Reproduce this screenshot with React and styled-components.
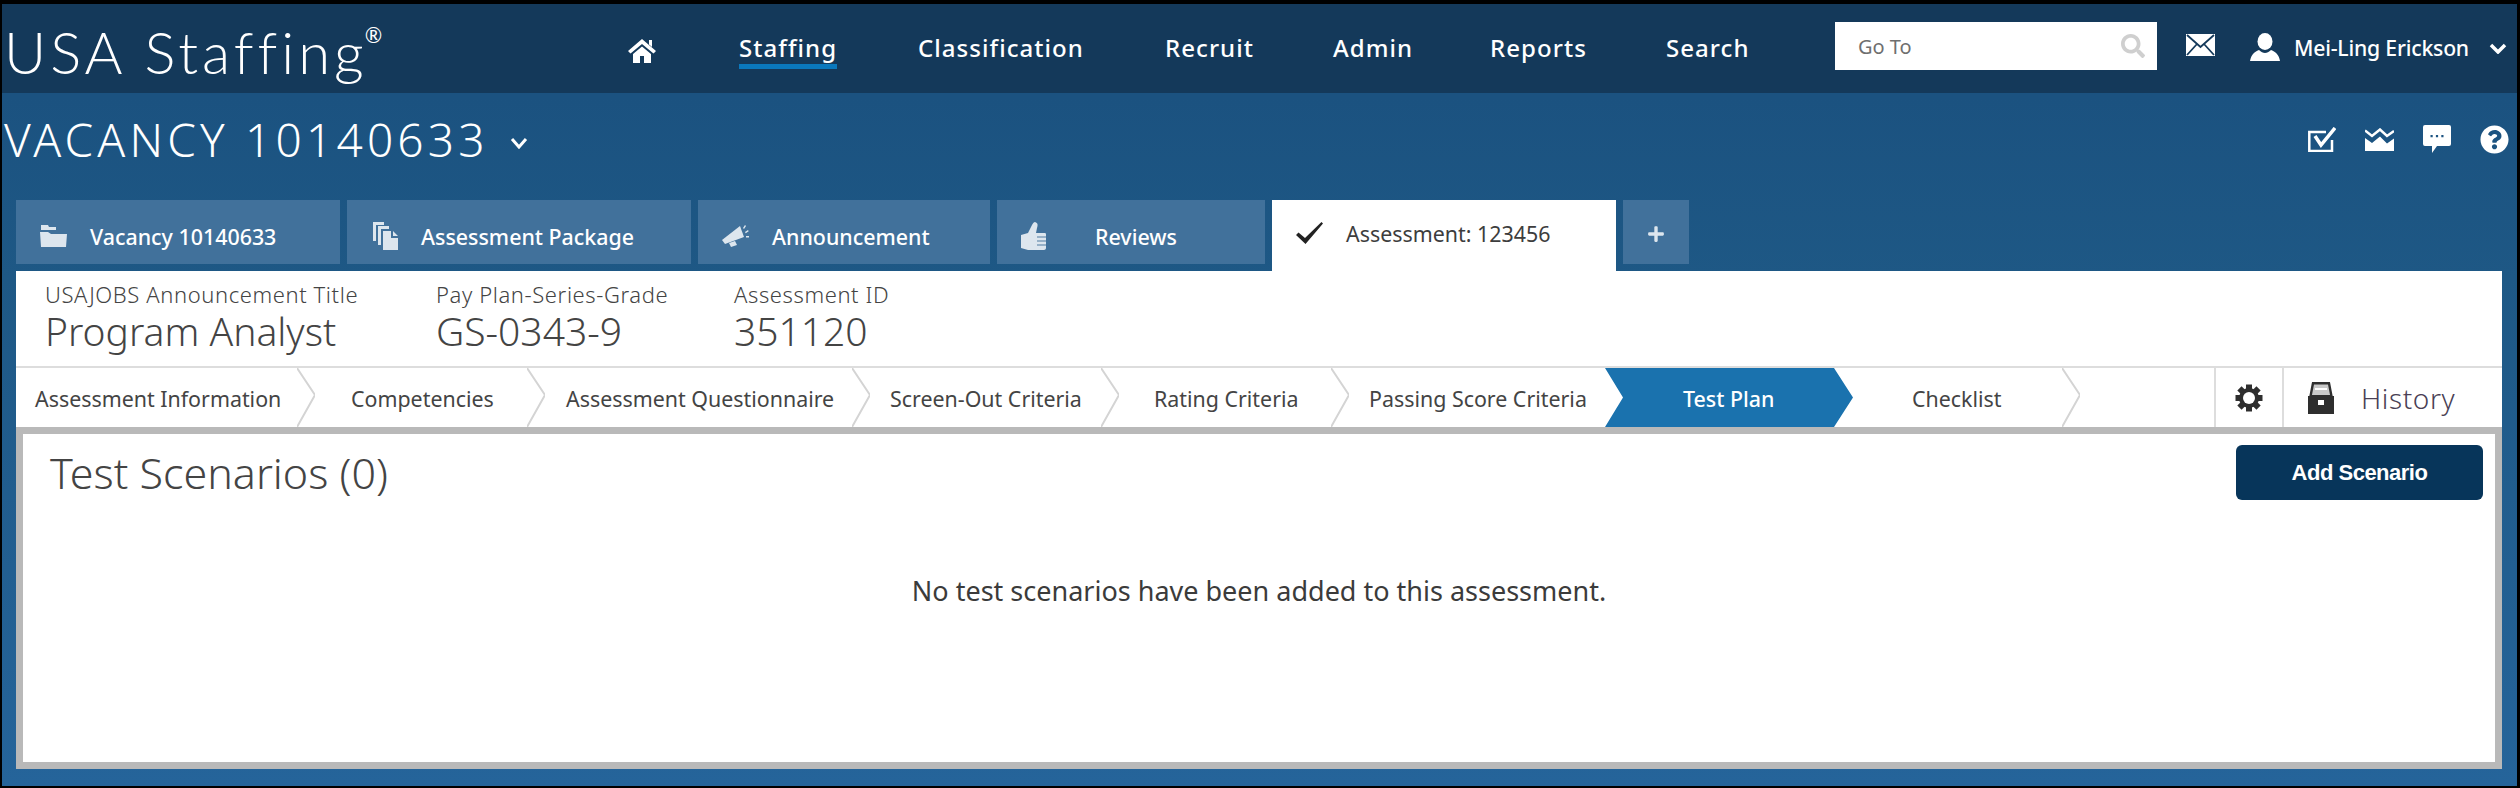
import React from 'react';
import styled, { createGlobalStyle } from 'styled-components';
import { FaSearch, FaQuestionCircle, FaPlus } from 'react-icons/fa';

const Global = createGlobalStyle`
  html, body { margin: 0; padding: 0; background: #000; }
  * { box-sizing: border-box; }
`;

const Page = styled.div`
  width: 2520px;
  height: 788px;
  padding: 4px 3px 2px 2px;
  background: #000;
  font-family: "Noto Sans", "Liberation Sans", sans-serif;
  overflow: hidden;
`;

const Frame = styled.div`
  height: 100%;
  display: flex;
  flex-direction: column;
  background: linear-gradient(#1b5280 12%, #1e5885 35%, #25649a 100%);
`;

const Header = styled.header`
  height: 89px;
  flex: none;
  display: flex;
  align-items: center;
  background: #14395a;
  color: #fff;
`;

const Logo = styled.div`
  width: 626px;
  padding-left: 2px;
  display: flex;
  font-size: 58px;
  font-family: Lato, sans-serif;
  font-weight: 300;
  letter-spacing: 4px;
  line-height: 1;
  margin-top: 6px;
  sup {
    font-size: 21px;
    font-weight: 400;
    line-height: 1;
    letter-spacing: 0;
    margin: 1px 0 0 -3px;
  }
`;

const Nav = styled.nav`
  align-self: flex-start;
  margin-top: 28px;
  display: flex;
  align-items: flex-start;
`;

const HomeLink = styled.a`
  width: 111px;
  margin-top: 7px;
  display: flex;
  color: #fff;
`;

const NavLink = styled.a`
  width: ${p => p.$w}px;
  font-size: 24px;
  font-weight: 500;
  line-height: 32px;
  letter-spacing: 1.05px;
  white-space: nowrap;
  span {
    display: inline-block;
    border-bottom: ${p => (p.$on ? '5px solid #0a78bd' : 'none')};
  }
`;

const GoTo = styled.div`
  width: 322px;
  height: 48px;
  margin-top: -5px;
  flex: none;
  display: flex;
  align-items: center;
  justify-content: space-between;
  padding: 0 12px 0 23px;
  background: #fff;
  color: #6f6f6f;
  font-size: 20px;
  svg { color: #cfcfcf; font-size: 24px; }
`;

const MailIcon = styled.svg`
  width: 29px;
  height: 22px;
  margin: -8px 35px 0 29px;
  flex: none;
`;

const UserIcon = styled.svg`
  width: 30px;
  height: 28px;
  margin: -4px 14px 0 0;
  flex: none;
`;

const UserName = styled.div`
  width: 195px;
  font-size: 21.2px;
  font-weight: 500;
  white-space: nowrap;
  letter-spacing: -0.2px;
  margin-top: -2px;
`;

const TitleRow = styled.div`
  height: 107px;
  flex: none;
  display: flex;
  align-items: center;
  justify-content: space-between;
  padding: 0 8px 15px 2px;
  color: #fff;
`;

const Title = styled.h1`
  margin: 0;
  display: flex;
  align-items: center;
  gap: 21px;
  font-size: 46px;
  font-weight: 300;
  line-height: 1;
  letter-spacing: 4.2px;
  svg { margin-top: 8px; }
`;

const ToolIcons = styled.div`
  display: flex;
  align-items: center;
  font-size: 29px;
  svg { display: block; margin-left: 29px; }
`;

const Tabs = styled.div`
  height: 71px;
  flex: none;
  display: flex;
  align-items: flex-start;
  gap: 7px;
  padding-left: 14px;
`;

const Tab = styled.div`
  width: ${p => p.$w}px;
  height: ${p => (p.$on ? 71 : 64)}px;
  display: flex;
  align-items: center;
  padding: ${p => (p.$on ? 0 : 8)}px 0 ${p => (p.$on ? 5 : 0)}px 24px;
  background: ${p => (p.$on ? '#fff' : '#41719b')};
  color: ${p => (p.$on ? '#3d3d3d' : '#fff')};
  font-size: 21.4px;
  font-weight: ${p => (p.$on ? 400 : 500)};
  white-space: nowrap;
`;

const TabIcon = styled.span`
  width: ${p => p.$w || 27}px;
  margin-right: ${p => p.$gap || 23}px;
  flex: none;
  display: flex;
  justify-content: center;
  color: #dde6ee;
  svg { display: block; }
`;

const PlusTab = styled.div`
  width: 66px;
  height: 64px;
  padding-top: 4px;
  display: flex;
  align-items: center;
  justify-content: center;
  background: #41719b;
  color: #dde6ee;
  font-size: 18px;
`;

const Sheet = styled.main`
  flex: 1;
  margin: 0 15px 17px 14px;
  display: flex;
  flex-direction: column;
  background: #fff;
  color: #3b3b3b;
`;

const InfoBar = styled.div`
  height: 97px;
  flex: none;
  display: flex;
  padding: 9px 0 0 29px;
  border-bottom: 2px solid #ddd;
`;

const InfoCol = styled.div`
  width: ${p => p.$w}px;
`;

const InfoLabel = styled.div`
  font-size: 22px;
  font-weight: 300;
  line-height: 29px;
  letter-spacing: 0.6px;
  color: #444;
  white-space: nowrap;
`;

const InfoValue = styled.div`
  font-size: 39px;
  font-weight: 300;
  line-height: 43px;
  color: #444;
  white-space: nowrap;
`;

const Steps = styled.div`
  height: 59px;
  flex: none;
  display: flex;
  align-items: stretch;
`;

const Step = styled.div`
  width: ${p => p.$w}px;
  padding: 2px 0 0 ${p => p.$pad}px;
  display: flex;
  align-items: center;
  font-size: 21.4px;
  white-space: nowrap;
  color: #444;
  flex: none;
`;

const ActiveStep = styled(Step)`
  background: #1a72ae;
  color: #fff;
  font-weight: 500;
  clip-path: polygon(0 0, 229px 0, 100% 50%, 229px 100%, 0 100%, 18px 50%);
`;

const Chevron = styled.svg`
  width: 18px;
  height: 59px;
  flex: none;
`;

const StepSpacer = styled.div`
  flex: 1;
`;

const GearCell = styled.div`
  width: 70px;
  flex: none;
  display: flex;
  align-items: center;
  justify-content: center;
  border-left: 2px solid #ddd;
  border-right: 2px solid #ddd;
`;

const HistoryCell = styled.div`
  width: 218px;
  flex: none;
  display: flex;
  align-items: center;
  gap: 27px;
  padding-left: 24px;
  font-size: 28px;
  font-weight: 300;
  color: #4a3f55;
  letter-spacing: 0.6px;
`;

const Panel = styled.section`
  flex: 1;
  display: flex;
  flex-direction: column;
  border: 7px solid #b9b9b9;
  padding: 11px 12px 0 27px;
`;

const PanelHead = styled.div`
  display: flex;
  align-items: flex-start;
  justify-content: space-between;
`;

const PanelTitle = styled.h2`
  margin: 0;
  font-size: 43px;
  font-weight: 300;
  line-height: 55px;
  color: #444;
`;

const AddButton = styled.button`
  width: 247px;
  height: 55px;
  padding-top: 2px;
  border: 0;
  border-radius: 6px;
  background: #07355a;
  color: #fff;
  font-family: "Liberation Sans", Arial, sans-serif;
  font-size: 22px;
  font-weight: 700;
  letter-spacing: -0.5px;
`;

const Empty = styled.p`
  margin: 73px 15px 0 0;
  text-align: center;
  font-size: 27px;
  line-height: 36px;
  color: #3b3b3b;
`;

const Divider = () => (
  <Chevron viewBox="0 0 18 59">
    <path d="M0 0 L18 27 L0 59" fill="none" stroke="#d4d4d4" strokeWidth="2" />
  </Chevron>
);

const HomeSvg = () => (
  <svg width="28" height="24" viewBox="0 0 28 24" fill="#fff">
    <path d="M14 0L28 12l-2.500 2.500L14 5 2.500 14.500 0 12z" />
    <path d="M21 1h3v7l-3-2.500z" />
    <path d="M5 15l9-7.500L23 15v9h-7v-7h-4v7H5z" />
  </svg>
);

const FolderSvg = () => (
  <svg width="27" height="22" viewBox="0 0 27 22" fill="currentColor">
    <path d="M1 0h7l1 2h7v3H1z" />
    <path d="M0 7h8l3 2h16l-1 13H1z" />
  </svg>
);

const FilesSvg = () => (
  <svg width="26" height="28" viewBox="0 0 26 28" fill="currentColor">
    <path d="M1 0h11v3H4v16H1z" />
    <path d="M6 4h11v3H9v16H6z" />
    <path d="M11 9h8v7h7v12H11zM21 9l5 5h-5z" />
  </svg>
);

const MegaphoneSvg = () => (
  <svg width="27" height="22" viewBox="0 0 27 22" fill="currentColor">
    <path d="M0 15L18 1l4 11-19 7z" />
    <path d="M7 18l6-2 2 4-6 2z" />
    <path d="M21 3l2-3 1 1-2 3zM23 7l3-2 .7 1.300-3 2zM24 11h3v1.500h-3z" />
  </svg>
);

const ThumbSvg = () => (
  <svg width="25" height="28" viewBox="0 0 25 28">
    <path d="M0 13l7-2 4-8c1-2 2-3 3-3 3 1 3 3 2 6l-1 5h9c1 0 1 1 1 2v13c0 1-1 2-2 2H7l-7-2z" fill="#dde6ee" />
    <path d="M16 15h9M16 19h9M16 23h9" stroke="#7f9fbb" strokeWidth="1.500" />
  </svg>
);

const CheckSvg = () => (
  <svg width="27" height="22" viewBox="0 0 27 22" fill="#222">
    <path d="M0 13l2.500-2.500L9 16 25.500 0 27 1.500 9.500 22z" />
  </svg>
);

const GearSvg = () => (
  <svg width="28" height="28" viewBox="0 0 28 28">
    {[0, 45, 90, 135].map(a => (
      <path key={a} d="M14 0.500V27.500" stroke="#2e2e2e" strokeWidth="6" transform={`rotate(${a} 14 14)`} />
    ))}
    <circle cx="14" cy="14" r="10" fill="#2e2e2e" />
    <circle cx="14" cy="14" r="6" fill="#fff" />
  </svg>
);

const ArchiveSvg = () => (
  <svg width="26" height="32" viewBox="0 0 26 32">
    <path d="M5 1.200h16l2.500 13h-21z" fill="#c9c9c9" stroke="#2e2e2e" strokeWidth="2.400" />
    <path d="M7 7h12" stroke="#fff" strokeWidth="2" />
    <path d="M0 14h26v18H0z" fill="#2e2e2e" />
    <path d="M10 18h6v5h-6z" fill="#fff" />
  </svg>
);

const CheckboxSvg = () => (
  <svg width="28" height="25" viewBox="0 0 28 25">
    <path d="M24 13v11H1.300V5H18" fill="none" stroke="#fff" strokeWidth="2.500" />
    <path d="M7 9l6 9L27 1" fill="none" stroke="#fff" strokeWidth="3.500" />
  </svg>
);

const InboxSvg = () => (
  <svg width="29" height="23" viewBox="0 0 29 23">
    <path d="M0 2.500L7 8l8-6.500L22 8l7-5" fill="none" stroke="#fff" strokeWidth="2.500" />
    <path d="M0 10l7 5 8-6.500 7 7 7-5V23H0z" fill="#fff" />
  </svg>
);

const ChatSvg = () => (
  <svg width="28" height="28" viewBox="0 0 28 28">
    <path d="M2 0h24a2 2 0 0 1 2 2v17a2 2 0 0 1-2 2H14l-5 7v-7H2a2 2 0 0 1-2-2V2a2 2 0 0 1 2-2z" fill="#fff" />
    <path d="M7.500 10h2.200v2.200H7.500zM12.900 10h2.200v2.200h-2.200zM18.300 10h2.200v2.200h-2.200z" fill="#1d5482" />
  </svg>
);

export default function App() {
  return (
    <Page>
      <Global />
      <Frame>
        <Header>
          <Logo>USA Staffing<sup>®</sup></Logo>
          <Nav>
            <HomeLink><HomeSvg /></HomeLink>
            <NavLink $w={179} $on><span>Staffing</span></NavLink>
            <NavLink $w={247}><span>Classification</span></NavLink>
            <NavLink $w={168}><span>Recruit</span></NavLink>
            <NavLink $w={157}><span>Admin</span></NavLink>
            <NavLink $w={176}><span>Reports</span></NavLink>
            <NavLink $w={169}><span>Search</span></NavLink>
          </Nav>
          <GoTo>Go To<FaSearch /></GoTo>
          <MailIcon viewBox="0 0 29 22">
            <path d="M0 0h29v22H0z" fill="#fff" />
            <path d="M1 1l13.500 12L28 1M1 21l10-11M28 21L18 10" fill="none" stroke="#14395a" strokeWidth="1.800" />
          </MailIcon>
          <UserIcon viewBox="0 0 30 28" fill="#fff">
            <ellipse cx="15" cy="8.500" rx="7.500" ry="8.500" />
            <path d="M0 28c1-6 4-9 9-11 2 2 4 3 6 3s4-1 6-3c5 2 8 5 9 11z" />
          </UserIcon>
          <UserName>Mei-Ling Erickson</UserName>
          <svg width="18" height="11" viewBox="0 0 18 11">
            <path d="M2 2l7 7 7-7" fill="none" stroke="#fff" strokeWidth="3.500" />
          </svg>
        </Header>

        <TitleRow>
          <Title>
            VACANCY 10140633
            <svg width="18" height="12" viewBox="0 0 18 12">
              <path d="M2 2l7 8 7-8" fill="none" stroke="#fff" strokeWidth="3" />
            </svg>
          </Title>
          <ToolIcons>
            <CheckboxSvg />
            <InboxSvg />
            <ChatSvg />
            <FaQuestionCircle />
          </ToolIcons>
        </TitleRow>

        <Tabs>
          <Tab $w={324}><TabIcon><FolderSvg /></TabIcon>Vacancy 10140633</Tab>
          <Tab $w={344}><TabIcon><FilesSvg /></TabIcon>Assessment Package</Tab>
          <Tab $w={292}><TabIcon><MegaphoneSvg /></TabIcon>Announcement</Tab>
          <Tab $w={268}><TabIcon $w={25} $gap={49}><ThumbSvg /></TabIcon>Reviews</Tab>
          <Tab $w={344} $on><TabIcon><CheckSvg /></TabIcon>Assessment: 123456</Tab>
          <PlusTab><FaPlus /></PlusTab>
        </Tabs>

        <Sheet>
          <InfoBar>
            <InfoCol $w={391}>
              <InfoLabel>USAJOBS Announcement Title</InfoLabel>
              <InfoValue>Program Analyst</InfoValue>
            </InfoCol>
            <InfoCol $w={298}>
              <InfoLabel>Pay Plan-Series-Grade</InfoLabel>
              <InfoValue>GS-0343-9</InfoValue>
            </InfoCol>
            <InfoCol $w={300}>
              <InfoLabel>Assessment ID</InfoLabel>
              <InfoValue>351120</InfoValue>
            </InfoCol>
          </InfoBar>

          <Steps>
            <Step $w={281} $pad={19}>Assessment Information</Step><Divider />
            <Step $w={212} $pad={36}>Competencies</Step><Divider />
            <Step $w={307} $pad={21}>Assessment Questionnaire</Step><Divider />
            <Step $w={231} $pad={20}>Screen-Out Criteria</Step><Divider />
            <Step $w={212} $pad={35}>Rating Criteria</Step><Divider />
            <Step $w={256} $pad={20}>Passing Score Criteria</Step>
            <ActiveStep $w={248} $pad={78}>Test Plan</ActiveStep>
            <Step $w={209} $pad={59}>Checklist</Step><Divider />
            <StepSpacer />
            <GearCell><GearSvg /></GearCell>
            <HistoryCell><ArchiveSvg />History</HistoryCell>
          </Steps>

          <Panel>
            <PanelHead>
              <PanelTitle>Test Scenarios (0)</PanelTitle>
              <AddButton>Add Scenario</AddButton>
            </PanelHead>
            <Empty>No test scenarios have been added to this assessment.</Empty>
          </Panel>
        </Sheet>
      </Frame>
    </Page>
  );
}
